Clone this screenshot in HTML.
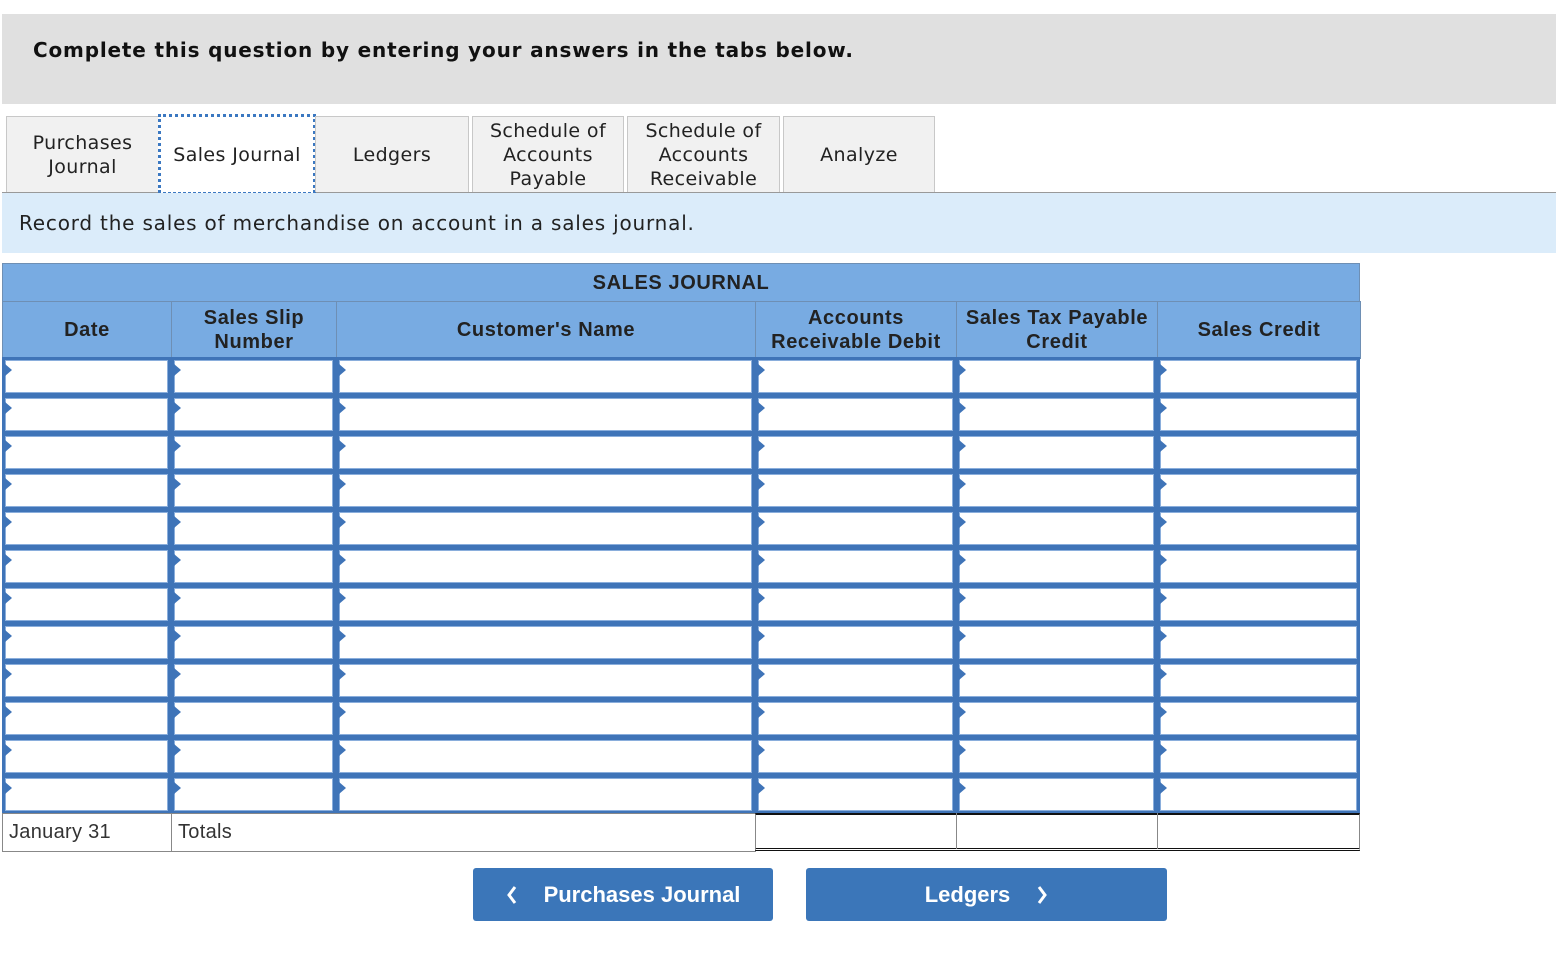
<!DOCTYPE html>
<html><head><meta charset="utf-8">
<style>
body{margin:0;width:1556px;height:966px;background:#fff;position:relative;font-family:"Liberation Sans",Arial,sans-serif;overflow:hidden}
.a{position:absolute;box-sizing:border-box}
.top{left:2px;top:14px;width:1554px;height:90px;background:#e0e0e0}
.top span{position:absolute;left:31px;top:24px;font:bold 20px "DejaVu Sans",sans-serif;color:#111;letter-spacing:0.82px}
.tab{top:116px;height:76px;background:#f1f1f1;border:1px solid #c8c8c8;border-bottom:none;font:19px "DejaVu Sans",sans-serif;color:#222;display:flex;align-items:center;justify-content:center;text-align:center;line-height:24px;letter-spacing:0.4px}
.act{background:#fff;border:3px dotted #3b78c1;border-bottom:1px dashed #3b78c1;height:79px;top:114px}
.line{left:2px;top:192px;width:1554px;height:1px;background:#999}
.info{left:2px;top:193px;width:1554px;height:60px;background:#dbecfa;font:20px "DejaVu Sans",sans-serif;color:#222;padding:18px 0 0 17px;letter-spacing:0.8px}
.hd{background:#78abe2;border:1px solid #6e8fb4;font-weight:bold;font-size:20px;letter-spacing:0.6px;color:#222;display:flex;align-items:center;justify-content:center;text-align:center;line-height:24px}
.cell{background:#3f74b8;padding:3px}
.cell div{width:100%;height:100%;background:#fff;border:1px solid #8aaedc;box-sizing:border-box;position:relative}
.cell div:after{content:"";position:absolute;left:-1px;top:3px;border-left:7px solid #3f74b8;border-top:6px solid transparent;border-bottom:6px solid transparent}
.tot{border:1px solid #888;font-size:20px;color:#333;padding:7px 0 0 6px;letter-spacing:0.3px}
.btn{top:868px;height:53px;background:#3b76b9;border-radius:3px;color:#fff;font-weight:bold;font-size:22px;display:flex;align-items:center;justify-content:center}
</style></head><body>
<div class="a top"><span>Complete this question by entering your answers in the tabs below.</span></div>
<div class="a line"></div>
<div class="a tab" style="left:6px;width:153px">Purchases<br>Journal</div>
<div class="a tab act" style="left:158px;width:158px">Sales Journal</div>
<div class="a tab" style="left:315px;width:154px">Ledgers</div>
<div class="a tab" style="left:472px;width:152px">Schedule of<br>Accounts<br>Payable</div>
<div class="a tab" style="left:627px;width:153px">Schedule of<br>Accounts<br>Receivable</div>
<div class="a tab" style="left:783px;width:152px">Analyze</div>
<div class="a info">Record the sales of merchandise on account in a sales journal.</div>
<div class="a hd" style="left:2px;top:263px;width:1358px;height:39px">SALES JOURNAL</div>
<div id="t"></div>
<div class="a tot" style="left:2px;top:813px;width:170px;height:39px">January 31</div>
<div class="a tot" style="left:171px;top:813px;width:585px;height:39px;border-left:1px solid #888">Totals</div>
<div class="a" style="left:755px;top:813px;width:605px;height:38px;border-top:2px solid #111;border-bottom:3px double #111;border-left:1px solid #888;border-right:1px solid #888"></div>
<div class="a" style="left:956px;top:813px;width:1px;height:36px;background:#888"></div>
<div class="a" style="left:1157px;top:813px;width:1px;height:36px;background:#888"></div>
<div class="a btn" style="left:473px;width:300px"><svg width="12" height="20" style="margin-right:26px"><path d="M9 2 L3 10 L9 18" stroke="#fff" stroke-width="3" fill="none"/></svg>Purchases Journal</div>
<div class="a btn" style="left:806px;width:361px">Ledgers<svg width="12" height="20" style="margin-left:26px"><path d="M3 2 L9 10 L3 18" stroke="#fff" stroke-width="3" fill="none"/></svg></div>
<script>
var xs=[2,171,336,755,956,1157,1360];
var names=["Date","Sales Slip<br>Number","Customer's Name","Accounts<br>Receivable Debit","Sales Tax Payable<br>Credit","Sales Credit"];
var h="";
for(var c=0;c<6;c++){
h+='<div class="a hd" style="left:'+xs[c]+'px;top:301px;width:'+(xs[c+1]-xs[c]+1)+'px;height:58px">'+names[c]+'</div>';
for(var r=0;r<12;r++){
h+='<div class="a cell" style="left:'+xs[c]+'px;top:'+(357+r*38)+'px;width:'+(xs[c+1]-xs[c])+'px;height:39px"><div></div></div>';
}}
document.getElementById("t").innerHTML=h;
</script>
</body></html>
